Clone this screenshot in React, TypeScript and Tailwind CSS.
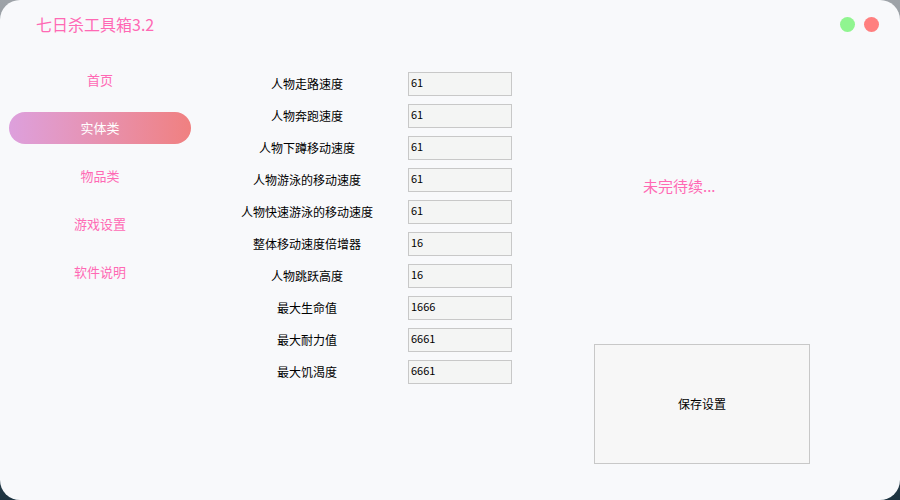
import React from "react";

const rows: [string, string][] = [
  ["人物走路速度", "61"],
  ["人物奔跑速度", "61"],
  ["人物下蹲移动速度", "61"],
  ["人物游泳的移动速度", "61"],
  ["人物快速游泳的移动速度", "61"],
  ["整体移动速度倍增器", "16"],
  ["人物跳跃高度", "16"],
  ["最大生命值", "1666"],
  ["最大耐力值", "6661"],
  ["最大饥渴度", "6661"],
];

const nav = ["首页", "实体类", "物品类", "游戏设置", "软件说明"];

export default function App() {
  const font = { fontFamily: '"Noto Sans CJK SC", "Noto Sans", sans-serif' };
  return (
    <div className="w-[900px] h-[500px] bg-gradient-to-b from-[#9ea3a8] via-[#6a7a84] to-[#1d3340]" style={font}>
      <div className="w-full h-full rounded-[20px] bg-[#f8f9fb] flex flex-col overflow-hidden">
        <div className="h-[46px] flex items-center justify-between pl-[36px] pr-[21px] pt-[2px]">
          <div className="text-[16px] text-[#ff69b4] leading-none">七日杀工具箱3.2</div>
          <div className="flex gap-[9px] items-center">
            <div className="w-[15px] h-[15px] rounded-full bg-[#90f590]" />
            <div className="w-[15px] h-[15px] rounded-full bg-[#ff7f7f]" />
          </div>
        </div>
        <div className="flex flex-1">
          <div className="w-[221px] pl-[9px] pt-[18px] flex flex-col gap-[16px]">
            {nav.map((n, i) => (
              <div
                key={n}
                className={
                  "w-[182px] h-[32px] rounded-full flex items-center justify-center text-[13px] " +
                  (i === 1
                    ? "bg-gradient-to-r from-[#dda0dd] to-[#f08080] text-white"
                    : "text-[#ff69b4]")
                }
              >
                {n}
              </div>
            ))}
          </div>
          <div className="pt-[26px] flex flex-col gap-[8px]">
            {rows.map(([l, v]) => (
              <div key={l} className="flex items-center h-[24px]">
                <div className="w-[172px] text-center text-[12px] text-black">{l}</div>
                <div className="ml-[15px] w-[104px] h-[24px] border border-[#c8c8c8] bg-[#f4f5f4] text-[11px] text-black pl-[2px] pt-[1px] leading-[16px]">
                  {v}
                </div>
              </div>
            ))}
          </div>
          <div className="flex-1 flex flex-col pt-[132px] pl-[82px]">
            <div className="ml-[49px] text-[15px] text-[#ff69b4] leading-none">未完待续...</div>
            <div className="mt-[151px] w-[216px] h-[120px] border border-[#c8c8c8] bg-[#f7f7f7] flex items-center justify-center text-[12px] text-black">
              保存设置
            </div>
          </div>
        </div>
      </div>
    </div>
  );
}
